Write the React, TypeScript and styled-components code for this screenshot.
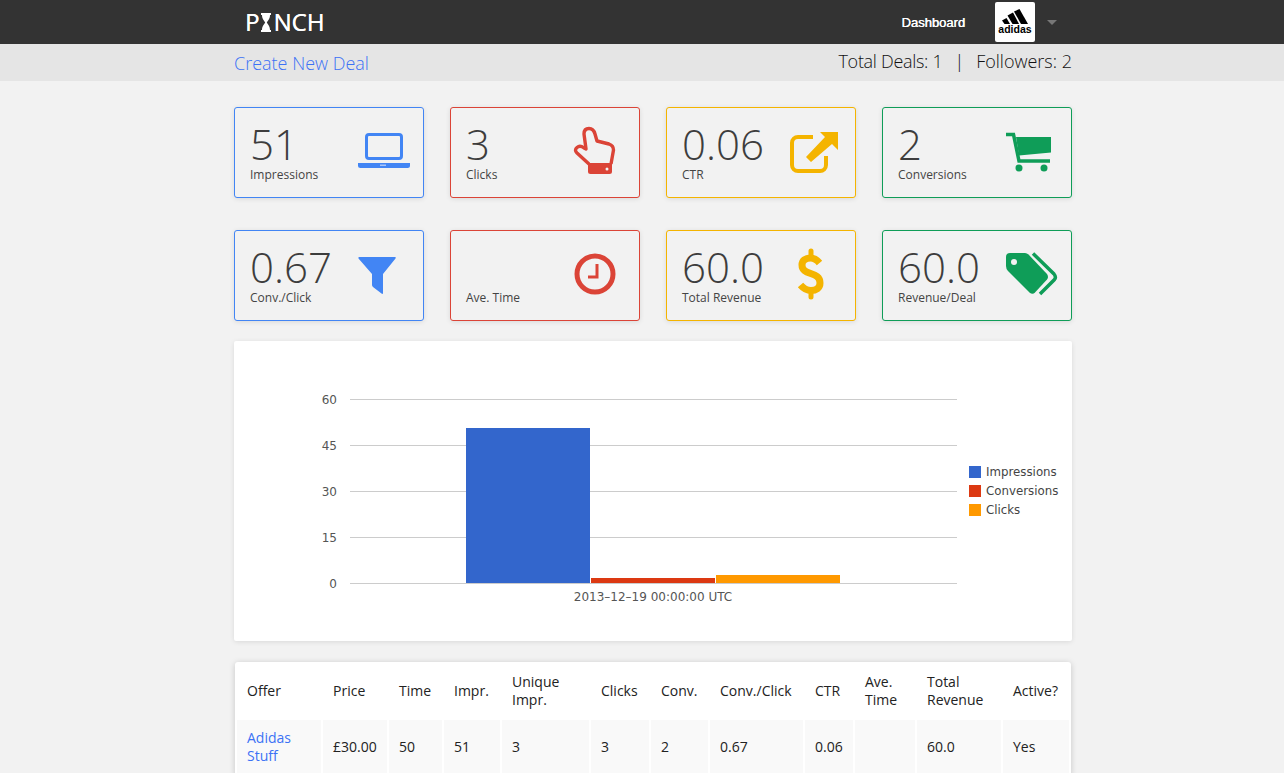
import React from 'react';
import styled, { createGlobalStyle } from 'styled-components';

const GlobalStyle = createGlobalStyle`
  html, body {
    margin: 0;
    padding: 0;
    background: #f2f2f2;
    font-family: "Open Sans", "Liberation Sans", sans-serif;
    color: #333;
    overflow: hidden;
  }
`;

const BLUE = '#4285f4';
const RED = '#db4437';
const YELLOW = '#f4b400';
const GREEN = '#0f9d58';

// --- icons, all drawn on the same 70x60 slot ---
const LaptopIcon = () => (
  <svg width="70" height="60" viewBox="0 0 70 60">
    <rect x="22.5" y="12.5" width="35" height="24" rx="2.5" fill="none" stroke={BLUE} strokeWidth="3" />
    <path d="M14 41h52v2.5a2.5 2.5 0 0 1-2.5 2.5h-47a2.5 2.5 0 0 1-2.5-2.5z" fill={BLUE} />
    <rect x="36" y="42.5" width="6" height="1.5" fill="#a9c6fa" />
  </svg>
);

const HandIcon = () => (
  <svg width="70" height="60" viewBox="0 0 70 60">
    <path
      d="M29 42 L17 31 Q14 28 17 25.5 Q20 23 24 26 L26 27 L24 12 Q24 6.5 29 6.5 Q33.5 6.5 35 12 L37 19 L49 22 Q53.5 23.5 53.5 28 L51 42"
      fill="none"
      stroke={RED}
      strokeWidth="3.4"
      strokeLinejoin="round"
    />
    <path d="M28 41h24v8.5a2.5 2.5 0 0 1-2.5 2.5h-19a2.5 2.5 0 0 1-2.5-2.5z" fill={RED} />
    <circle cx="47" cy="47" r="1.5" fill="#f2f2f2" />
  </svg>
);

const ShareIcon = () => (
  <svg width="70" height="60" viewBox="0 0 70 60">
    <path
      d="M37 15H22a6 6 0 0 0-6 6v22a6 6 0 0 0 6 6h22a6 6 0 0 0 6-6v-9"
      fill="none"
      stroke={YELLOW}
      strokeWidth="4"
    />
    <path d="M44 10H62V28L56 22 35 40 30 35 49 15z" fill={YELLOW} />
  </svg>
);

const CartIcon = () => (
  <svg width="70" height="60" viewBox="0 0 70 60">
    <path d="M14 12.5h7.5L27 39h31" fill="none" stroke={GREEN} strokeWidth="3.5" />
    <path d="M24 15H59V30.5L27 33.5z" fill={GREEN} />
    <circle cx="27" cy="46" r="3.5" fill={GREEN} />
    <circle cx="52" cy="46" r="3.5" fill={GREEN} />
  </svg>
);

const FilterIcon = () => (
  <svg width="70" height="60" viewBox="0 0 70 60">
    <path
      d="M15 12H51Q52.5 12 51.5 13.5L39 29V48Q39 49.5 37.5 48.5L29 42Q28 41 28 40V29L14.5 13.5Q14 12 15 12z"
      fill={BLUE}
    />
  </svg>
);

const ClockIcon = () => (
  <svg width="70" height="60" viewBox="0 0 70 60">
    <circle cx="35" cy="29" r="18" fill="none" stroke={RED} strokeWidth="5" />
    <path d="M37 19V32H28" fill="none" stroke={RED} strokeWidth="3" />
  </svg>
);

const DollarIcon = () => (
  <svg width="70" height="60" viewBox="0 0 70 60">
    <path
      d="M43.5 18C41 15 38 13 34.5 13C29.5 13 26 15.5 26 20C26 31 44 26 44 38C44 43 40 45.5 35 45.5C30.5 45.5 27.5 43.5 24.5 40"
      fill="none"
      stroke={YELLOW}
      strokeWidth="7"
    />
    <path d="M35 6V12M35 46V52" stroke={YELLOW} strokeWidth="5" strokeLinecap="round" />
  </svg>
);

const TagsIcon = () => (
  <svg width="70" height="60" viewBox="0 0 70 60">
    <path
      d="M18 8H33Q35 8 36.5 9.5L55 29Q57 32 55 34.5L43 47.5Q40.5 50 37.5 47.5L16 26Q14 24 14 21V12Q14 8 18 8z"
      fill={GREEN}
    />
    <circle cx="22" cy="17" r="3" fill="#f2f2f2" />
    <path d="M41 8.5L62 29Q64.5 32 62.5 34.5L48 49" fill="none" stroke={GREEN} strokeWidth="3.5" />
  </svg>
);

const AdidasMark = () => (
  <svg width="40" height="40" viewBox="0 0 40 40">
    <path d="M7 18.5L11.5 16L15 22H9.5z" fill="#000" />
    <path d="M12.5 13.5L18 10.5L24 22H17.5z" fill="#000" />
    <path d="M19 9.5L24.5 7L33 22H26z" fill="#000" />
    <text x="20" y="30.5" textAnchor="middle" fontFamily="Liberation Sans" fontWeight="700" fontSize="10.5">
      adidas
    </text>
  </svg>
);

const HourglassIcon = () => (
  <svg width="10" height="19" viewBox="0 0 10 19">
    <path d="M0 0H10V2H9C9 6 6.5 8 5.8 9.5C6.5 11 9 13 9 17H10V19H0V17H1C1 13 3.5 11 4.2 9.5C3.5 8 1 6 1 2H0z" fill="#fff" />
  </svg>
);

const stats = [
  { value: '51', label: 'Impressions', color: BLUE, icon: <LaptopIcon /> },
  { value: '3', label: 'Clicks', color: RED, icon: <HandIcon /> },
  { value: '0.06', label: 'CTR', color: YELLOW, icon: <ShareIcon /> },
  { value: '2', label: 'Conversions', color: GREEN, icon: <CartIcon /> },
  { value: '0.67', label: 'Conv./Click', color: BLUE, icon: <FilterIcon /> },
  { value: '', label: 'Ave. Time', color: RED, icon: <ClockIcon /> },
  { value: '60.0', label: 'Total Revenue', color: YELLOW, icon: <DollarIcon /> },
  { value: '60.0', label: 'Revenue/Deal', color: GREEN, icon: <TagsIcon /> },
];

const columns = [84, 64, 53, 56, 87, 58, 57, 93, 48, 60, 84, 66];
const headers = ['Offer', 'Price', 'Time', 'Impr.', 'Unique Impr.', 'Clicks', 'Conv.', 'Conv./Click', 'CTR', 'Ave. Time', 'Total Revenue', 'Active?'];
const row = ['£30.00', '50', '51', '3', '3', '2', '0.67', '0.06', '', '60.0', 'Yes'];

const gridLines = [
  { y: 58, label: '60' },
  { y: 104, label: '45' },
  { y: 150, label: '30' },
  { y: 196, label: '15' },
  { y: 242, label: '0' },
];

const bars = [
  { x: 232, width: 124, top: 87, color: '#3366cc' },
  { x: 357, width: 124, top: 237, color: '#dc3912' },
  { x: 482, width: 124, top: 234, color: '#ff9900' },
];

const legend = [
  { y: 125, label: 'Impressions', color: '#3366cc' },
  { y: 144, label: 'Conversions', color: '#dc3912' },
  { y: 163, label: 'Clicks', color: '#ff9900' },
];

const App = () => (
  <>
    <GlobalStyle />
    <TopBar>
      <TopBarInner>
        <Logo>
          P
          <HourglassIcon />
          NCH
        </Logo>
        <TopNav>
          <NavLink>Dashboard</NavLink>
          <Avatar>
            <AdidasMark />
          </Avatar>
          <Caret />
        </TopNav>
      </TopBarInner>
    </TopBar>

    <SubBar>
      <SubBarInner>
        <CreateLink>Create New Deal</CreateLink>
        <Totals>
          <TotalDeals>Total Deals: 1</TotalDeals>
          <span>|</span>
          <span>Followers: 2</span>
        </Totals>
      </SubBarInner>
    </SubBar>

    <Content>
      <StatGrid>
        {stats.map((stat) => (
          <StatCard key={stat.label} $color={stat.color}>
            <StatText>
              <StatValue>{stat.value}</StatValue>
              <StatLabel>{stat.label}</StatLabel>
            </StatText>
            <StatIcon>{stat.icon}</StatIcon>
          </StatCard>
        ))}
      </StatGrid>

      <ChartCard>
        <svg width="838" height="300" viewBox="0 0 838 300">
          {gridLines.map(({ y, label }) => (
            <g key={label}>
              <line x1="116" x2="723" y1={y + 0.5} y2={y + 0.5} stroke="#ccc" />
              <ChartText x="103" y={y + 4.5} textAnchor="end">{label}</ChartText>
            </g>
          ))}
          {bars.map((bar) => (
            <rect key={bar.x} x={bar.x} y={bar.top} width={bar.width} height={242 - bar.top} fill={bar.color} />
          ))}
          <ChartText x="419" y="259.5" textAnchor="middle">2013–12–19 00:00:00 UTC</ChartText>
          {legend.map((item) => (
            <g key={item.label}>
              <rect x="735" y={item.y} width="12" height="12" fill={item.color} />
              <LegendText x="752" y={item.y + 9.5}>{item.label}</LegendText>
            </g>
          ))}
        </svg>
      </ChartCard>

      <TableCard>
        <OfferTable>
          <colgroup>
            {columns.map((width, i) => (
              <col key={i} style={{ width }} />
            ))}
          </colgroup>
          <thead>
            <tr>
              {headers.map((title) => (
                <HeadCell key={title}>{title}</HeadCell>
              ))}
            </tr>
          </thead>
          <tbody>
            <tr>
              <BodyCell>
                <OfferLink>Adidas Stuff</OfferLink>
              </BodyCell>
              {row.map((value, i) => (
                <BodyCell key={i}>{value}</BodyCell>
              ))}
            </tr>
          </tbody>
        </OfferTable>
      </TableCard>
    </Content>
  </>
);
export default App;

// --- Styled Components ---
const TopBar = styled.header`
  height: 44px;
  background: #333;
`;

const TopBarInner = styled.div`
  width: 838px;
  height: 100%;
  margin-left: 234px;
  display: flex;
  align-items: center;
  justify-content: space-between;
`;

const Logo = styled.div`
  display: flex;
  align-items: center;
  column-gap: 2px;
  margin-left: 11px;
  font-size: 24px;
  line-height: 44px;
  color: #fff;
  text-shadow: 0.3px 0 0 #fff;

  svg {
    margin-top: 1px;
  }
`;

const TopNav = styled.nav`
  display: flex;
  align-items: center;
`;

const NavLink = styled.a`
  font-family: "Liberation Sans", Arial, sans-serif;
  font-size: 13px;
  color: #fff;
  text-shadow: 0.4px 0 0 #fff;
`;

const Avatar = styled.div`
  width: 40px;
  height: 40px;
  margin-left: 30px;
  background: #fff;
  border-radius: 2px;
`;

const Caret = styled.span`
  width: 0;
  height: 0;
  margin: 1px 15px 0 12px;
  border-left: 5px solid transparent;
  border-right: 5px solid transparent;
  border-top: 5px solid #777;
`;

const SubBar = styled.div`
  height: 37px;
  background: #e5e5e5;
`;

const SubBarInner = styled.div`
  width: 838px;
  height: 100%;
  margin-left: 234px;
  display: flex;
  align-items: center;
  justify-content: space-between;
`;

const CreateLink = styled.a`
  font-size: 18px;
  font-weight: 300;
  color: #3c72f5;
`;

const Totals = styled.div`
  display: flex;
  column-gap: 12px;
  margin-top: -3px;
  font-size: 18px;
  font-weight: 300;
  color: #111;
`;

const TotalDeals = styled.span`
  letter-spacing: -0.3px;
`;

const Content = styled.main`
  width: 838px;
  margin-left: 234px;
  padding: 26px 0 40px;
`;

const StatGrid = styled.div`
  display: grid;
  grid-template-columns: repeat(4, 190px);
  column-gap: 26px;
  row-gap: 32px;
`;

const StatCard = styled.div<{ $color: string }>`
  box-sizing: border-box;
  height: 91px;
  display: flex;
  justify-content: space-between;
  background: #f2f2f2;
  border: 1px solid ${({ $color }) => $color};
  border-radius: 3px;
  box-shadow: 0 1px 5px rgba(0, 0, 0, 0.1);
`;

const StatText = styled.div`
  display: flex;
  flex-direction: column;
  justify-content: flex-end;
  padding: 0 0 14px 15px;
`;

const StatValue = styled.div`
  height: 45px;
  font-size: 42px;
  font-weight: 300;
  line-height: 44px;
  color: #3d3d3d;
`;

const StatLabel = styled.div`
  font-size: 12px;
  line-height: 16px;
  color: #444;
`;

const StatIcon = styled.div`
  width: 70px;
  height: 60px;
  margin: 14px 9px 0 0;

  svg {
    display: block;
  }
`;

const ChartCard = styled.section`
  height: 300px;
  margin-top: 20px;
  background: #fff;
  border-radius: 2px;
  box-shadow: 0 1px 5px rgba(0, 0, 0, 0.1);

  svg {
    display: block;
  }
`;

const ChartText = styled.text`
  font-family: "DejaVu Sans", sans-serif;
  font-size: 12px;
  fill: #555;
`;

const LegendText = styled(ChartText)`
  font-size: 11.8px;
  fill: #444;
`;

const TableCard = styled.section`
  margin: 21px 1px 0;
  background: #fff;
  border-radius: 3px;
  box-shadow: 0 1px 6px rgba(0, 0, 0, 0.18);
`;

const OfferTable = styled.table`
  width: 836px;
  table-layout: fixed;
  border-collapse: separate;
  border-spacing: 2px;
  font-size: 14px;
  line-height: 18px;
  color: #222;
`;

const HeadCell = styled.th`
  box-sizing: border-box;
  height: 54px;
  padding: 0 10px;
  font-weight: 400;
  text-align: left;
  color: #222;
`;

const BodyCell = styled.td`
  box-sizing: border-box;
  height: 54px;
  padding: 0 10px;
  background: #f9f9f9;
`;

const OfferLink = styled.a`
  color: #3c72f5;
`;
